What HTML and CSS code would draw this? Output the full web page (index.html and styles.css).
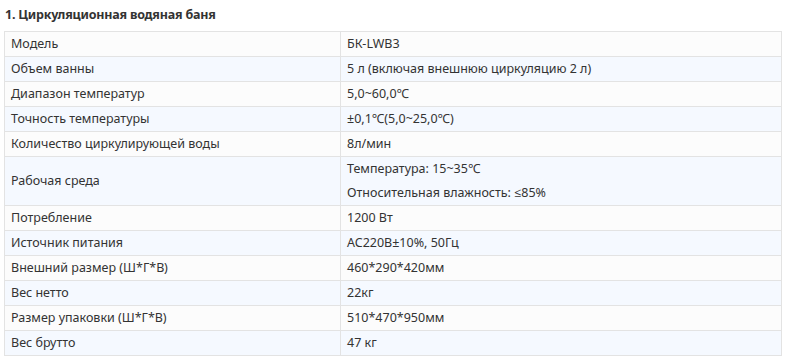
FILE: index.html
```html
<!DOCTYPE html>
<html lang="ru">
<head>
<meta charset="utf-8">
<title>Циркуляционная водяная баня</title>
<link rel="stylesheet" href="styles.css">
</head>
<body>
<div class="spec">
  <h4 class="spec-title">1. Циркуляционная водяная баня</h4>
  <table class="spec-table">
    <tbody>
      <tr><td class="c1">Модель</td><td>БК-LWB3</td></tr>
      <tr><td class="c1">Объем ванны</td><td>5 л (включая внешнюю циркуляцию 2 л)</td></tr>
      <tr><td class="c1">Диапазон температур</td><td>5,0~60,0℃</td></tr>
      <tr><td class="c1">Точность температуры</td><td>±0,1℃(5,0~25,0℃)</td></tr>
      <tr><td class="c1">Количество циркулирующей воды</td><td>8л/мин</td></tr>
      <tr><td class="c1">Рабочая среда</td><td><p class="line">Температура: 15~35℃</p><p class="line">Относительная влажность: ≤85%</p></td></tr>
      <tr><td class="c1">Потребление</td><td>1200 Вт</td></tr>
      <tr><td class="c1">Источник питания</td><td>AC220В±10%, 50Гц</td></tr>
      <tr><td class="c1">Внешний размер (Ш*Г*В)</td><td>460*290*420мм</td></tr>
      <tr><td class="c1">Вес нетто</td><td>22кг</td></tr>
      <tr><td class="c1">Размер упаковки (Ш*Г*В)</td><td>510*470*950мм</td></tr>
      <tr><td class="c1">Вес брутто</td><td>47 кг</td></tr>
    </tbody>
  </table>
</div>
</body>
</html>
```
FILE: styles.css
```css
html, body {
  margin: 0;
  padding: 0;
  background: #ffffff;
}
.spec {
  padding: 4px 7px 0 4px;
  font-family: "Noto Sans", "Open Sans", sans-serif;
  color: #333333;
}
.spec-title {
  margin: 0 0 5px 1px;
  font-size: 12.5px;
  letter-spacing: -0.2px;
  line-height: 22px;
  font-weight: bold;
  color: #333333;
}
.spec-table {
  width: 100%;
  border-collapse: collapse;
  font-size: 12.5px;
}
.spec-table td {
  border: 1px solid #e3e3e3;
  padding: 0 6px;
  height: 24px;
  line-height: 24px;
  vertical-align: middle;
}
.spec-table td.c1 {
  width: 323px;
}
.spec-table tr:nth-child(odd) td {
  background: #fcfcfc;
}
.spec-table tr:nth-child(even) td {
  background: #f5f9ff;
}
.line {
  margin: 0;
  line-height: 24px;
}
```
